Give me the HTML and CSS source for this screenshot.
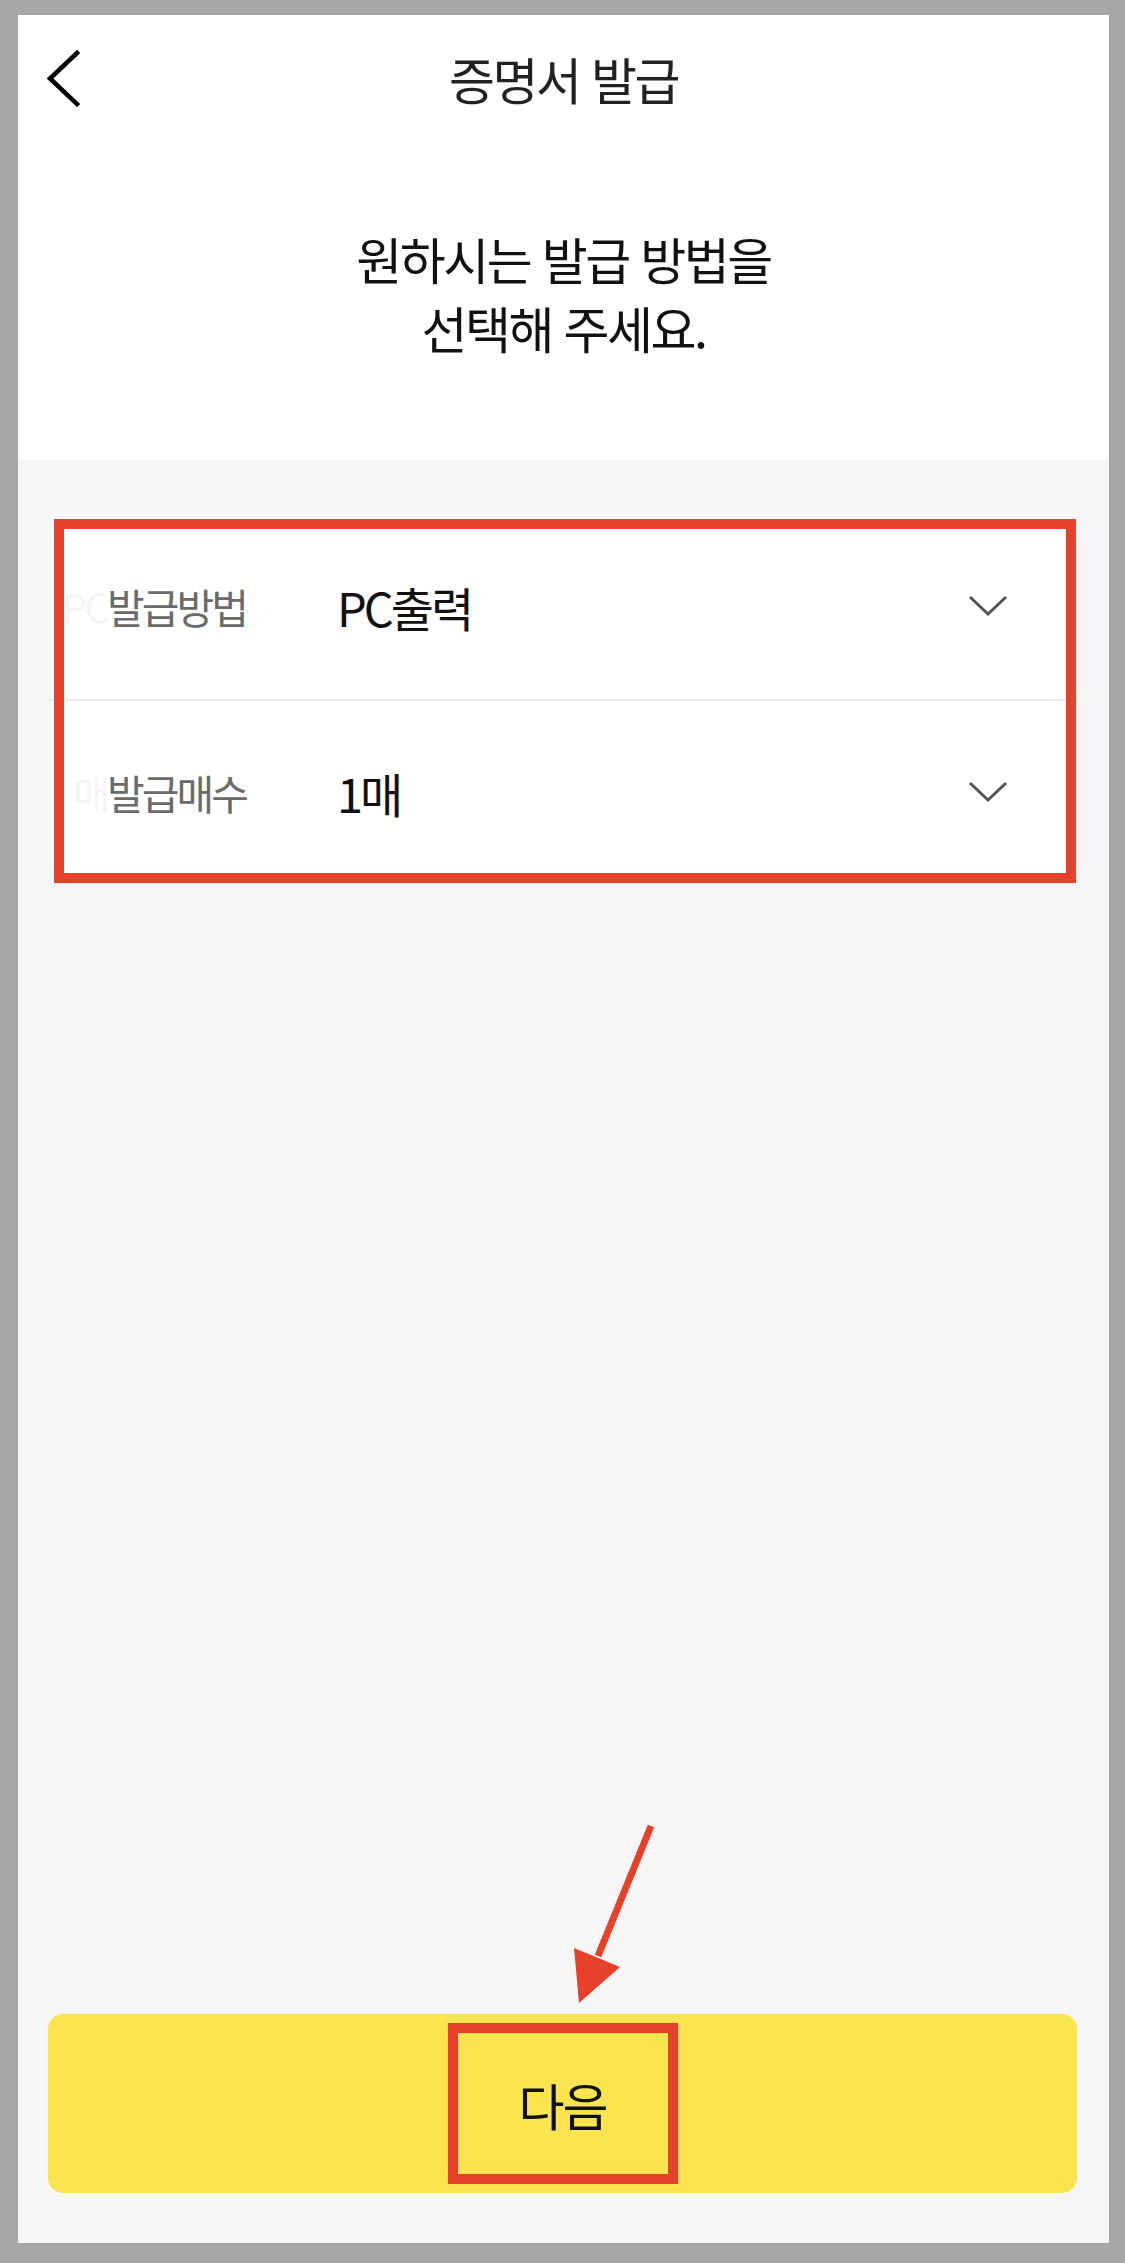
FILE: index.html
```html
<!DOCTYPE html>
<html lang="ko">
<head>
<meta charset="utf-8">
<title>증명서 발급</title>
<link rel="stylesheet" href="styles.css">
</head>
<body>
<div class="page">
  <div class="top">
    <header class="appbar">
      <div class="appbar-left">
        <svg class="back" width="40" height="60" viewBox="0 0 40 60" aria-hidden="true">
          <path d="M35 4 L8 29.5 L35 55" fill="none" stroke="#000" stroke-width="4.5" stroke-linecap="square" stroke-linejoin="miter"/>
        </svg>
      </div>
      <h1 class="title">증명서 발급</h1>
      <div class="appbar-right"></div>
    </header>
    <section class="intro">
      <p class="intro-text">원하시는 발급 방법을<br>선택해 주세요.</p>
    </section>
  </div>
  <main class="main">
    <div class="card">
      <div class="row">
        <div class="label"><span class="ghost">PC</span><span class="label-text">발급방법</span></div>
        <div class="value">PC출력</div>
        <svg class="chev" width="44" height="26" viewBox="0 0 44 26" aria-hidden="true">
          <path d="M4 4 L22 21 L40 4" fill="none" stroke="#555" stroke-width="3"/>
        </svg>
      </div>
      <div class="divider"></div>
      <div class="row row2">
        <div class="label"><span class="ghost">매</span><span class="label-text">발급매수</span></div>
        <div class="value">1매</div>
        <svg class="chev" width="44" height="26" viewBox="0 0 44 26" aria-hidden="true">
          <path d="M4 4 L22 21 L40 4" fill="none" stroke="#555" stroke-width="3"/>
        </svg>
      </div>
      <div class="mark mark-card"></div>
    </div>
    <div class="spacer"></div>
    <button class="next" type="button"><span class="next-box">다음</span></button>
  </main>
  <svg class="arrow" width="110" height="190" viewBox="0 0 110 190" aria-hidden="true">
    <line x1="83" y1="6" x2="30" y2="136" stroke="#e8412a" stroke-width="7"/>
    <polygon points="6,128 52,147 11,183" fill="#e8412a"/>
  </svg>
</div>
</body>
</html>
```

FILE: styles.css
```css
* { box-sizing: border-box; }
html, body { margin: 0; padding: 0; }
body {
  background: #a6a6a6;
  padding: 15px 16px 20px 18px;
  font-family: "Noto Sans CJK KR", "Noto Sans", sans-serif;
  color: #111;
}
.page {
  position: relative;
  height: 2228px;
  background: #f6f6f6;
  display: flex;
  flex-direction: column;
}
.top { background: #fff; }
.appbar {
  height: 126px;
  display: grid;
  grid-template-columns: 1fr auto 1fr;
  align-items: center;
}
.appbar-left { padding-left: 24px; display: flex; align-items: center; }
.back { display: block; margin-top: 2px; }
.title {
  margin: 0;
  font-size: 50px;
  font-weight: 400;
  color: #222;
  letter-spacing: -2.5px;
  line-height: 1;
}
.intro {
  height: 318px;
  padding-top: 83px;
}
.intro-text {
  margin: 0;
  text-align: center;
  font-size: 50px;
  line-height: 69px;
  letter-spacing: -2.5px;
  color: #111;
}
.main {
  flex: 1;
  display: flex;
  flex-direction: column;
  padding: 54px 32px 50px 30px;
}
.card {
  position: relative;
  background: #fff;
}
.row {
  height: 186px;
  display: flex;
  align-items: center;
  padding-left: 14px;
}
.row2 { height: 182px; }
.divider { height: 2px; background: #ececec; }
.label {
  width: 275px;
  display: flex;
  align-items: center;
  white-space: nowrap;
}
.ghost {
  width: 45px;
  overflow: hidden;
  text-align: right;
  font-size: 40px;
  color: #f5f5f5;
  letter-spacing: -3px;
  direction: rtl;
}
.label-text {
  font-size: 41px;
  color: #6b6b6b;
  letter-spacing: -3px;
}
.value {
  flex: 1;
  font-size: 47px;
  color: #111;
  letter-spacing: -3px;
}
.chev { margin-right: 67px; display: block; }
.mark {
  position: absolute;
  border: 10px solid #e8412a;
  pointer-events: none;
}
.mark-card { top: 6px; left: 6px; right: 1px; bottom: 0; }
.spacer { flex: 1; }
.next {
  height: 179px;
  border: 0;
  border-radius: 15px;
  background: #fae551;
  display: flex;
  align-items: center;
  justify-content: center;
  font-family: inherit;
  padding: 0;
}
.next-box {
  width: 230px;
  height: 161px;
  border: 10px solid #e8412a;
  display: flex;
  align-items: center;
  justify-content: center;
  font-size: 50px;
  color: #111;
  letter-spacing: -2px;
}
.arrow {
  position: absolute;
  left: 550px;
  top: 1805px;
}
```
